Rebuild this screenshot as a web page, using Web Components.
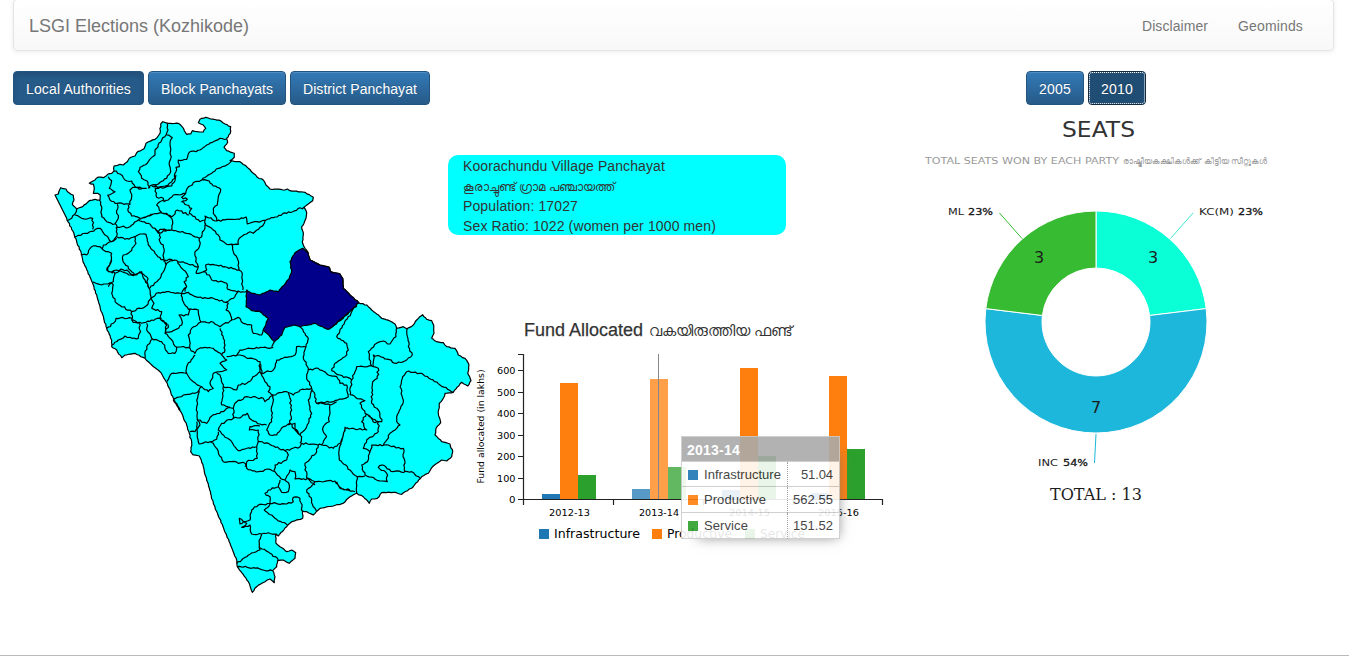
<!DOCTYPE html>
<html lang="en">
<head>
<meta charset="utf-8">
<title>LSGI Elections (Kozhikode)</title>
<style>
  html, body { margin: 0; height: 657px; overflow: hidden; background: #fff; }
  body { font: 14px/20px "Liberation Sans", Arial, sans-serif; color: #333; }
</style>
</head>
<body>
<election-page></election-page>
<script>
const define = (name, html, setup) => {
  const tpl = document.createElement('template');
  tpl.innerHTML = html;
  customElements.define(name, class extends HTMLElement {
    connectedCallback() {
      if (this.shadowRoot) return;
      this.attachShadow({ mode: 'open' }).append(tpl.content.cloneNode(true));
      if (setup) setup.call(this, this.shadowRoot);
    }
  });
};

/* Text tracked out to a given width */
define('fit-text', `<style>:host{display:inline-block;white-space:nowrap;line-height:inherit}span{display:inline-block}</style><span><slot></slot></span>`,
  function (root) {
    const w = +this.getAttribute('w'), span = root.querySelector('span');
    const n = [...this.textContent].length;
    const natural = span.getBoundingClientRect().width;
    this.style.width = w + 'px';
    if (natural) span.style.letterSpacing = (w - natural) / n + 'px';
  });

define('nav-bar', `<style>
:host{display:flex;box-sizing:border-box;height:52px;margin:-1px 15px 0 13px;padding:2px 30px 0 15px;align-items:center;justify-content:space-between;
border:1px solid #e4e4e4;border-radius:4px;background:linear-gradient(#fff,#f8f8f8);box-shadow:inset 0 1px 0 rgba(255,255,255,.15),0 1px 5px rgba(0,0,0,.075);color:#777}
.brand{font-size:18px}.links{display:flex;gap:30px}</style>
<div class="brand"><fit-text w="220">LSGI Elections (Kozhikode)</fit-text></div>
<div class="links"><fit-text w="66">Disclaimer</fit-text><fit-text w="65">Geominds</fit-text></div>`);

define('nav-button', `<style>
:host{display:block;box-sizing:border-box;height:34px;padding:7px 12px;border:1px solid #245580;border-radius:4px;color:#fff;
line-height:20px;background:linear-gradient(#337ab7,#265a88);text-shadow:0 -1px 0 rgba(0,0,0,.2);box-shadow:inset 0 1px 0 rgba(255,255,255,.15)}
:host([active]){background:#265a88;box-shadow:inset 0 3px 5px rgba(0,0,0,.125)}
:host([focused]){background:#204d74;outline:1px dotted #fff;outline-offset:-2px;border-color:#122b40}</style><slot></slot>`);

define('button-row', `<style>:host{display:flex;gap:4px}</style><slot></slot>`);

define('info-card', `<style>:host{display:block;box-sizing:border-box;width:338px;height:80px;padding:1px 15px;border-radius:10px;background:#0ff}
div{height:20px;line-height:20px;white-space:nowrap}.ml{font-size:11.6px;line-height:22px}</style>
<div><fit-text w="202">Koorachundu Village Panchayat</fit-text></div>
<div class="ml">കൂരാച്ചുണ്ട് ഗ്രാമ പഞ്ചായത്ത്</div>
<div><fit-text w="115">Population: 17027</fit-text></div>
<div><fit-text w="253">Sex Ratio: 1022 (women per 1000 men)</fit-text></div>`);

const SHEET = { A: [40, 110], B: [180, 110], C: [80, 260], D: [240, 240], E: [150, 400], F: [300, 380] };
const OUTLINE = [
 ['A', '45 255 55 252 62 233 78 237 85 247 100 256 102 270 97 283 110 297 128 290 148 272 165 268 180 270 181 256 173 250 160 250 163 235 160 222 148 220 165 210 175 201 190 203 203 193 215 190 222 183 222 168 240 163 250 165 262 155 268 145 285 138 290 128 312 116 318 100 345 88 360 70 362 42 368 35 385 40 415 40 428 52 440 73 452 72 457 62 472 65 490 66 497 55 490 45 475 38 480 28 497 22 512 27 537 30 555 42 572 50 571 70 560 85 563 97 552 112 560 122 583 130 583 142 570 152 600 155'],
 ['B', '205 175 220 190 232 202 250 210 258 225 270 237 315 240 322 237 330 242 375 247 400 262 398 272 385 282 372 292 380 308 378 325 372 340 365 350 370 375 367 395'],
 ['D', '188 10 195 25 205 40 210 60 240 75 268 82 272 95 300 102 308 115 310 145 330 165 356 188 380 195 395 210 410 222 425 235 450 243 465 252 470 265 490 260 500 266 520 255 530 240 548 224 560 238 575 242 581 255 582 280 575 295 590 305 610 308 620 320 645 325 655 345 675 355 687 375 683 400 693 422 683 438 665 427 640 457 615 460 610 475'],
 ['F', '418 70 415 100 422 128 408 145 405 165 425 185 450 192 458 215 455 230 440 243 425 240 400 258 385 280 365 290 340 320 305 343 280 337 245 338 232 355 215 357 208 370 190 350 170 340 150 350 130 370 100 378 60 385'],
 ['E', '505 330 490 345 470 335 458 333 458 355 425 365 410 380 385 408 378 402 378 430 390 440 410 455 425 450 437 458 435 475 418 490 400 480 383 482 380 500 368 512 375 530 373 548 360 537 345 545 320 560 307 577 295 545 262 500 260 480 240 430 190 310 160 200 148 168 130 165 122 155 125 130 118 100 110 75 95 40 70 0'],
 ['C', '300 450 280 415 262 370 240 335 215 315 195 295 165 280 135 285 125 293 110 270 95 260 95 240 80 205 60 140 40 75 8 0'],
 ['A', '125 435 103 375 80 325']
];
const SELECTED = [['D', '188 25 165 38 150 65 155 95 148 115 115 155 90 150 60 165 35 160 20 150 18 200 35 212 60 215 85 235 70 270 90 290 103 305 125 285 135 262 160 255 180 260 225 250 265 268 310 232 356 188 330 165 310 145 308 115 300 102 272 95 268 82 240 75 210 60 205 40']];
const BORDERS = {
 A: ['382 40 384 60 378 75 365 90 345 120 345 135 325 155 300 172 295 185 305 205 320 212 330 235',
  '380 75 397 83 390 100 394 140 388 165 392 185 380 205 355 222 335 225 325 235',
  '222 183 240 192 255 210 275 213 285 230 305 235 320 235',
  '205 200 215 212 208 235 225 245 203 255 210 270 232 280 270 283 275 260 270 240 278 232 305 237',
  '335 228 360 230 375 228 395 215 405 205 408 172 418 170 415 150 440 148 450 125 468 125 500 105 540 85 560 87',
  '348 235 380 230 395 228 405 212 408 195',
  '345 232 350 262 370 265 372 275 385 270 400 255 437 250 442 235 465 215 485 210 515 190 535 175 560 165 575 152',
  '485 210 508 213 520 228 542 238 535 260 532 285 520 295 520 310 530 325 530 332',
  '437 250 425 262 442 268 425 275 440 285 455 295 448 310 465 320 480 335 495 330 495 318 530 333 610 325 618 321 622 342 650 335 665 333',
  '370 270 350 285 358 300 365 308 395 320 412 300 448 315', '365 308 340 312 300 325 275 318 265 305 265 285',
  '232 283 230 310 235 325 225 340 232 352 270 350 295 330 325 340 345 355 355 370 360 358 395 360 398 335 390 320',
  '295 328 320 320 340 312', '390 320 380 310 365 308',
  '178 270 185 290 185 320 200 335 225 342', '110 297 105 312 95 325 82 332', '105 315 125 325 158 325 158 358',
  '103 380 135 370 180 355 195 375 215 395 230 378 228 352',
  '122 435 140 435 155 410 180 410 190 420 205 425 215 430 210 460 200 480 225 490 220 515 205 530', '215 395 190 405 185 418', '215 395 230 385',
  '225 490 240 482 260 490 280 497 300 485 320 500 327 535', '230 380 255 388 285 380 288 400 270 425 250 435 248 450 270 480 285 495',
  '285 380 300 372 318 373 325 405 345 430 375 455 378 465', '345 355 360 370 360 395 370 405 372 455',
  '360 370 370 362 395 360 440 370 478 385', '375 450 405 450 440 460 475 470', '497 340 485 380 478 385 478 410 465 425 467 455 475 470 468 490',
  '497 345 515 355 535 375 540 390 560 403 595 403 598 385 630 365 640 370 660 352 673 340 675 333',
  '495 330 497 345',
  '468 490 490 485 500 480 497 465 505 462 555 470 597 480', '490 485 508 495 515 510 560 520 565 540',
  '408 450 425 475 440 490 445 500 432 515 440 530 435 545', '405 450 380 460 375 475 355 510 330 535'],
 B: ['245 333 372 292', '155 403 160 425 172 445 177 480 187 490 188 540'],
 C: ['95 0 85 20 85 35 98 40', '95 35 110 30 140 30 150 40 170 45 185 35 195 60 207 85 213 115 195 140 155 155 110 130 95 100 100 75 90 68 65 75 38 65',
  '315 70 320 80 305 98', '213 115 235 98 260 95 305 100 325 97 355 112 400 115 437 127 460 115 475 95', '445 88 470 95 500 95',
  '305 100 310 125 325 148 355 150 362 185 400 187 420 200 455 180 450 160 438 150 445 130 437 127',
  '213 115 222 130 215 145 245 155 240 175 250 185 260 190 255 220 275 215 305 195 305 180 297 165 325 165 330 148',
  '155 155 155 180 185 190 215 180 245 175', '245 180 265 195 255 220 270 235 290 262 285 280 265 280 245 245 215 235 200 210 200 190',
  '80 205 100 190 108 175 155 175 160 187 178 190 182 215 175 235 150 232 135 228 115 240 95 255', '215 238 200 260 195 295',
  '290 262 325 262 345 280 350 270 375 262 400 265 425 285 435 270 430 235 420 205', '362 187 335 205 325 225 330 262',
  '345 285 320 320 320 340 275 340 260 365', '320 340 340 365 365 380 385 395 400 385 390 370 400 340 420 335 440 330 420 310 440 300 430 290 425 285',
  '280 418 310 405 345 400 357 390 350 420 352 480 380 490 395 468 430 455 450 440', '357 390 365 380', '425 435 430 380 420 345 410 340', '425 435 460 445',
  '352 480 360 495 345 515 330 515', '430 380 455 385 470 390 475 375 500 370 540 335 540 305 480 285 440 290', '470 285 480 270 510 265 580 262',
  '455 180 475 172 490 190 515 195 520 220 545 225 550 210', '460 445 470 425 500 410 550 415 555 425 570 410', '540 335 545 345'],
 D: ['103 305 95 320', '180 260 195 280 205 295 198 320 170 320 165 345 110 360 100 390 65 400 60 370',
  '65 400 75 425 90 440 85 455 100 465 140 455 160 465 180 450 215 445 200 410 205 385 190 350 198 320', '90 470 100 465',
  '205 390 235 385 265 405 290 410 300 430 320 435 325 470 280 485 230 490 225 465 215 445',
  '356 188 335 215 290 290 320 310 325 330 315 350 285 370 275 392 300 405 335 420 330 465', '356 188 310 235 268 268',
  '335 420 345 395 350 380 395 378 388 350 385 335 410 310 430 303 450 312 468 290 470 262',
  '395 378 400 380 400 345 430 352 470 370 500 360 517 345 505 320 502 266',
  '400 380 415 385 412 415 398 425 395 490 415 510 425 545 405 548 385 525 375 520 360 490 375 482 330 465',
  '640 457 600 435 545 400 500 395 488 410 480 440 490 480 470 530 470 545 480 555 450 580 440 600',
  '100 465 95 500 95 545 80 570 90 585 110 585 130 560 150 550 155 510 150 475 145 460',
  '150 550 180 585 200 560 215 520 205 480 215 450', '230 490 245 490 270 495 268 545 250 560 250 575 260 590', '270 495 290 485'],
 E: ['140 65 142 100 148 132 180 125 190 130 205 155 220 185 245 185 285 190 290 205 325 215 360 208 375 215 392 235',
  '250 25 250 55 215 70 205 90 225 112 245 125 265 152 320 140 325 125 325 90 298 90 300 80 330 78',
  '250 55 275 50 292 40 305 60 330 72 350 75', '182 125 200 118 205 95', '320 140 322 175 290 185 285 200',
  '325 125 355 130 405 152 450 140 455 130 515 135 550 145 570 130 580 105 585 80', '405 152 415 165 410 180 375 195 372 215',
  '450 130 455 110 435 90 435 70 415 75', '530 110 515 135', '505 135 500 155 465 190 470 235 495 255',
  '390 235 405 240 420 210 435 215 435 237 480 237 500 245 555 243 570 265 600 270',
  '390 240 385 260 355 270 345 280 360 290 360 310 325 315 305 330 300 360 270 372 268 355 290 370 275 382 300 375 305 402 335 402',
  '385 260 395 277 415 275 418 255 405 240', '360 310 410 312 430 305 430 292 450 295 458 335', '360 312 343 330 380 358 412 375',
  '380 405 355 398 335 402 328 430 330 450 300 463 260 490', '330 443 360 460 385 480', '262 500 310 503 340 510 368 512', '495 245 470 270 485 300 490 320 500 335'],
 F: ['135 145 130 165 118 205 118 240 150 270 172 290 170 340', '135 145 200 150 185 125 198 102', '198 102 235 125 235 155 200 180 190 205 210 215',
  '260 180 250 195', '210 215 215 195 265 195 275 200 310 205 315 275',
  '210 215 205 240 185 255 195 285 245 303 262 305 260 280 235 262 245 255 280 275 335 275 360 295', '172 290 195 288', '110 305 120 322 165 335']
};
define('district-map', `<style>:host{display:block;width:430px;height:490px}svg{display:block;overflow:visible}</style>
<svg width="430" height="490" viewBox="13 105 430 490"></svg>`, function (root) {
  const points = (sheet, text) => {
    const [ox, oy] = SHEET[sheet], n = text.split(' ').map(Number), out = [];
    for (let i = 0; i < n.length; i += 2) out.push([ox + n[i] / 3, oy + n[i + 1] / 3]);
    return out;
  };
  /* small deterministic wiggle between the surveyed points */
  const rough = (pts, amp) => {
    let d = 'M' + pts[0].map(v => v.toFixed(1));
    for (let i = 1; i < pts.length; i++) {
      const [ax, ay] = pts[i - 1], [bx, by] = pts[i], len = Math.hypot(bx - ax, by - ay), k = Math.floor(len / 2);
      for (let j = 1; j < k; j++) {
        const t = j / k, s = Math.sin(ax * 12.9 + ay * 7.2 + j * 78.2) * 43758.5;
        const o = ((s - Math.floor(s)) - .5) * amp;
        d += 'L' + (ax + (bx - ax) * t - (by - ay) / len * o).toFixed(1) + ',' + (ay + (by - ay) * t + (bx - ax) / len * o).toFixed(1);
      }
      d += 'L' + bx.toFixed(1) + ',' + by.toFixed(1);
    }
    return d;
  };
  const ring = parts => rough(parts.flatMap(([s, t]) => points(s, t)), .9) + 'Z';
  const inner = Object.entries(BORDERS).flatMap(([s, l]) => l.map(t => rough(points(s, t), 1.8))).join('');
  root.querySelector('svg').innerHTML = `<g stroke="#000" stroke-width="1.2" stroke-linejoin="round">
    <path d="${ring(OUTLINE)}" fill="#0ff"/><path d="${inner}" fill="none"/><path d="${ring(SELECTED)}" fill="#00008b"/></g>`;
});

define('fund-chart', `<style>
:host{display:block;position:relative;width:420px;height:200px}
svg{display:block;overflow:visible}text{font-family:"DejaVu Sans",sans-serif;font-size:9.5px;fill:#000}.lg text{font-size:12px}
fund-tooltip{position:absolute;left:210px;top:86px}</style>
<svg width="420" height="200" viewBox="471 350 420 200"></svg><fund-tooltip></fund-tooltip>`, function (root) {
  const colors = ['#1f77b4', '#ff7f0e', '#2ca02c'];
  const fit = w => `textLength="${w}" lengthAdjust="spacingAndGlyphs"`;
  const years = [['2012-13', 542, [494, 383, 475], 549, 41], ['2013-14', 632, [489, 379, 467], 639, 40], ['2014-15', 722, [490, 368, 456], 729, 41], ['2015-16', 811, [493, 376, 449], 818, 41]];
  let s = '';
  for (const [label, x, tops, lx, lw] of years) {
    tops.forEach((y, i) => s += `<rect x="${x + i * 18}" y="${y}" width="18" height="${499.5 - y}" fill="${colors[i]}" opacity="${x === 632 ? .75 : 1}"/>`);
    s += `<text x="${lx}" y="516" ${fit(lw)}>${label}</text>`;
  }
  s += '<path d="M658.5 354V499" stroke="#888"/><path d="M518 354.5H523.5V505M523.5 499.5H882.5V505M613.5 499.5V505M703.5 499.5V505M793.5 499.5V505" fill="none" stroke="#222" stroke-width="1.2"/>';
  [499.5, 478.5, 456.5, 435.5, 413.5, 392.5, 370.5].forEach((y, i) => {
    s += `<path d="M518 ${y}H523" stroke="#222"/><text x="${i ? 497 : 509}" y="${y + 3.5}" ${fit(i ? 18.5 : 6.5)}>${i * 100}</text>`;
  });
  s += `<text transform="translate(484 483.5) rotate(-90)" ${fit(114)}>Fund allocated (in lakhs)</text><g class="lg">`;
  [['Infrastructure', 539, 86], ['Productive', 652, 65], ['Service', 745, 45]].forEach(([t, x, w], i) =>
    s += `<rect x="${x}" y="529" width="10" height="10" fill="${colors[i]}"/><text x="${x + 15}" y="538" ${fit(w)}>${t}</text>`);
  root.querySelector('svg').innerHTML = s + '</g>';
});

define('fund-tooltip', `<style>
:host{display:block;box-sizing:border-box;width:159px;border:1px solid #ccc;background:#fff;opacity:.9;box-shadow:7px 7px 12px -9px #777;color:#333}
.head{height:24px;line-height:26px;padding-left:5px;background:#aaa;color:#fff;font-weight:bold}
.row{display:grid;box-sizing:border-box;grid-template-columns:106px 1fr;height:26px;border-top:1px solid #ccc;font-size:13px;line-height:26px}
.row.first{height:25px}
.name{display:flex;align-items:center;gap:6px;padding-left:6px;border-right:1px dotted #999}.name i{width:10px;height:10px;background:var(--c)}
.val{text-align:right;padding-right:6px}</style>
<div class="head"><fit-text w="53">2013-14</fit-text></div>
<div class="row first"><div class="name" style="--c:#1f77b4"><i></i><fit-text w="77">Infrastructure</fit-text></div><div class="val"><fit-text w="32">51.04</fit-text></div></div>
<div class="row"><div class="name" style="--c:#ff7f0e"><i></i><fit-text w="62">Productive</fit-text></div><div class="val"><fit-text w="40">562.55</fit-text></div></div>
<div class="row"><div class="name" style="--c:#2ca02c"><i></i><fit-text w="44">Service</fit-text></div><div class="val"><fit-text w="40">151.52</fit-text></div></div>`);

define('fund-heading', `<style>:host{display:flex;gap:6px;align-items:center;height:24px;font-size:18px;white-space:nowrap;-webkit-text-stroke:.25px #333}small{font-size:15.3px;padding-top:2px;-webkit-text-stroke:0}</style>
<fit-text w="119">Fund Allocated</fit-text><small>വകയിരുത്തിയ ഫണ്ട്</small>`);

define('seats-donut', `<style>:host{display:block;width:380px;height:400px}svg{display:block;overflow:visible}
text{font-family:"DejaVu Sans",sans-serif;font-size:9.5px;fill:#222}.n{font-size:16px;fill:#1c1c1c}</style>
<svg width="380" height="400" viewBox="906 113 380 400"></svg>`, function (root) {
  const cx = 1096, cy = 322, R = 111, r = 54, T = 2 * Math.PI;
  const at = (a, q) => `${(cx + q * Math.sin(a)).toFixed(2)} ${(cy - q * Math.cos(a)).toFixed(2)}`;
  const slice = (a, b, c) => { const big = b - a > Math.PI ? 1 : 0;
    return `<path d="M${at(a, R)}A${R} ${R} 0 ${big} 1 ${at(b, R)}L${at(b, r)}A${r} ${r} 0 ${big} 0 ${at(a, r)}Z" fill="${c}" stroke="#fff"/>`; };
  const fit = w => `textLength="${w}" lengthAdjust="spacingAndGlyphs"`;
  root.querySelector('svg').innerHTML =
    `<text x="1062" y="137" style="font-size:22px;fill:#333" ${fit(73)}>SEATS</text>
     <text x="925" y="164" style="font-size:9.5px;fill:#999" ${fit(194)}>TOTAL SEATS WON BY EACH PARTY</text>
     <text x="1123" y="164" style="font-size:8.4px;fill:#999">രാഷ്ട്രീയകക്ഷികള്‍ക്ക് കിട്ടിയ സീറ്റുകള്‍</text>` +
    slice(0, 3 / 13 * T, '#0affd6') + slice(3 / 13 * T, 10 / 13 * T, '#1cb7da') + slice(10 / 13 * T, T, '#36bb32') +
    `<path d="M1170.5 238.5L1193 213" stroke="#3fe8d0"/><path d="M1022 238.5L999.5 213" stroke="#36bb32"/><path d="M1096 434L1094.5 463" stroke="#1cb7da"/>
     <text x="948" y="215" ${fit(16)}>ML</text><text x="968" y="215" ${fit(25)} stroke="#111" stroke-width=".3">23%</text>
     <text x="1199" y="215" ${fit(35)}>KC(M)</text><text x="1238" y="215" ${fit(25)} stroke="#111" stroke-width=".3">23%</text>
     <text x="1038" y="466" ${fit(20)}>INC</text><text x="1063" y="466" ${fit(25)} stroke="#111" stroke-width=".3">54%</text>
     <text class="n" x="1034" y="263">3</text><text class="n" x="1148" y="263">3</text><text class="n" x="1091" y="413">7</text>
     <text class="n" x="1050" y="500" ${fit(92)} style="font-family:'DejaVu Serif',serif">TOTAL : 13</text>`;
});

define('election-page', `<style>
:host{display:flex;flex-direction:column;box-sizing:border-box;height:656px;border-bottom:1px solid #bbb}
main{display:grid;grid-template-columns:435px 458px 1fr;padding:20px 15px 0 13px}
.mid{padding-top:84px}info-card{margin-bottom:83px}fund-heading{margin-left:76px}fund-chart{margin:8px 0 0 23px}
.right button-row{margin-left:120px}seats-donut{margin-top:8px}</style>
<nav-bar></nav-bar>
<main>
<section><button-row><nav-button active><fit-text w="105">Local Authorities</fit-text></nav-button><nav-button><fit-text w="112">Block Panchayats</fit-text></nav-button><nav-button><fit-text w="114">District Panchayat</fit-text></nav-button></button-row><district-map></district-map></section>
<section class="mid"><info-card></info-card><fund-heading></fund-heading><fund-chart></fund-chart></section>
<section class="right"><button-row><nav-button><fit-text w="32">2005</fit-text></nav-button><nav-button focused><fit-text w="32">2010</fit-text></nav-button></button-row><seats-donut></seats-donut></section>
</main>`);
</script>
</body>
</html>
